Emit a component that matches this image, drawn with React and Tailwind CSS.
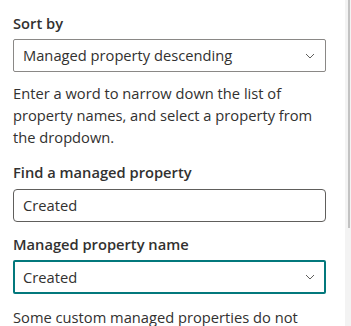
const Chevron = () => (
  <svg width="10" height="6" viewBox="0 0 10 6" fill="none" className="shrink-0">
    <path d="M1 1l4 4 4-4" stroke="#605e5c" strokeWidth="1" />
  </svg>
);

const Label = ({ children, className = "" }) => (
  <div className={"shrink-0 pt-[5px] pb-[6px] text-[14.7px] font-semibold leading-[20px] text-[#323130] " + className}>
    {children}
  </div>
);

const Dropdown = ({ value, focused }) => (
  <div
    className={
      focused
        ? "flex h-[34px] shrink-0 items-center justify-between rounded-[2px] border-2 border-[#03787c] pl-[8px] pr-[9px]"
        : "flex h-[33px] shrink-0 items-center justify-between rounded-[2px] border border-[#8a8886] pl-[9px] pr-[10px]"
    }
  >
    <span className="text-[14.7px] text-[#323130]">{value}</span>
    <Chevron />
  </div>
);

export default function App() {
  return (
    <div
      className="flex h-[326px] w-[351px] overflow-hidden bg-white"
      style={{ fontFamily: '"Open Sans", "Noto Sans", sans-serif' }}
    >
      <div className="flex w-[345px] shrink-0 flex-col pl-[13px] pr-[19px] pt-[8px]">
        <Label>Sort by</Label>
        <Dropdown value="Managed property descending" />

        <p className="mt-[10px] shrink-0 text-[14.7px] leading-[22px] text-[#323130]">
          Enter a word to narrow down the list of
          <br />
          property names, and select a property from
          <br />
          the dropdown.
        </p>

        <Label className="mt-[9px] pb-[7px]">Find a managed property</Label>
        <div className="flex h-[33px] shrink-0 items-center rounded-[4px] border border-[#605e5c] px-[9px] text-[14.7px] text-[#323130]">
          Created
        </div>

        <Label className="mt-[7px]">Managed property name</Label>
        <Dropdown value="Created" focused />

        <p className="mt-[12px] shrink-0 text-[14.7px] leading-[22px] text-[#323130]">
          Some custom managed properties do not
        </p>
      </div>
      <div className="w-[6px] shrink-0 bg-[#f3f3f3]">
        <div className="ml-[3px] h-[228px] w-[2px] bg-[#c2c2c2]" />
      </div>
    </div>
  );
}
